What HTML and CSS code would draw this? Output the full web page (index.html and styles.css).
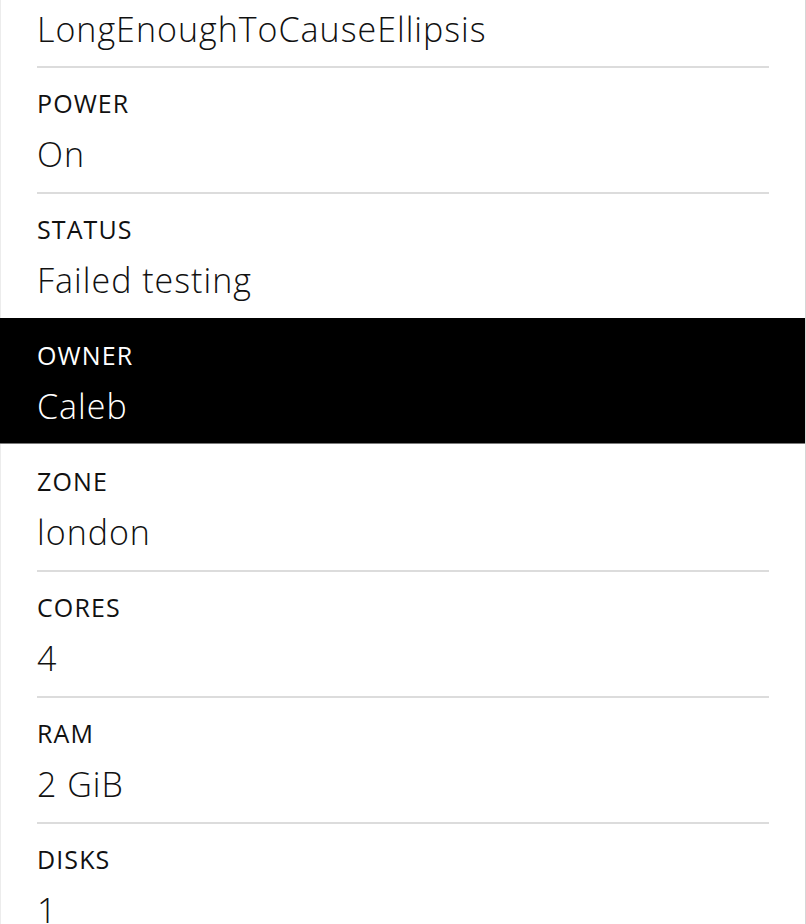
FILE: index.html
```html
<!DOCTYPE html>
<html lang="en">
<head>
<meta charset="utf-8">
<title>Machine details</title>
<link rel="stylesheet" href="styles.css">
</head>
<body>
<div class="panel">
  <ul class="details">
    <li class="item item--partial">
      <div class="inner">
        <div class="value value--ellipsis">LongEnoughToCauseEllipsis</div>
      </div>
    </li>
    <li class="item">
      <div class="inner">
        <div class="label">POWER</div>
        <div class="value">On</div>
      </div>
    </li>
    <li class="item">
      <div class="inner">
        <div class="label">STATUS</div>
        <div class="value">Failed testing</div>
      </div>
    </li>
    <li class="item item--active">
      <div class="inner">
        <div class="label">OWNER</div>
        <div class="value">Caleb</div>
      </div>
    </li>
    <li class="item">
      <div class="inner">
        <div class="label">ZONE</div>
        <div class="value">london</div>
      </div>
    </li>
    <li class="item">
      <div class="inner">
        <div class="label">CORES</div>
        <div class="value">4</div>
      </div>
    </li>
    <li class="item">
      <div class="inner">
        <div class="label">RAM</div>
        <div class="value">2 GiB</div>
      </div>
    </li>
    <li class="item">
      <div class="inner">
        <div class="label">DISKS</div>
        <div class="value">1</div>
      </div>
    </li>
  </ul>
</div>
</body>
</html>
```
FILE: styles.css
```css
html, body {
  margin: 0;
  padding: 0;
  background: #ffffff;
}

body {
  font-family: "Open Sans", "Noto Sans", sans-serif;
  color: #111111;
}

.panel {
  width: 806px;
  box-sizing: border-box;
  border-left: 1px solid #ececec;
  border-right: 1px solid #d6d6d6;
}

.details {
  list-style: none;
  margin: 0;
  padding: 0;
}

.item {
  padding: 0 36px;
}

.inner {
  border-top: 2px solid #dcdcdc;
  padding: 20px 0 17px;
}

.item--partial .inner {
  border-top: 0;
  padding: 4px 0 12px;
}

.label {
  font-size: 25px;
  line-height: 30px;
  font-weight: 500;
  letter-spacing: 1.1px;
}

.value {
  font-size: 34px;
  line-height: 42px;
  font-weight: 300;
  letter-spacing: 1px;
  margin-top: 15px;
  white-space: nowrap;
}

.value--ellipsis {
  margin-top: 0;
  line-height: 50px;
  overflow: hidden;
  text-overflow: ellipsis;
}

.item--active {
  background: #000000;
  color: #ffffff;
  margin-left: -1px;
  padding-left: 37px;
  border-bottom: 1px solid #7a7a7a;
}

.item--active .inner {
  border-top-color: transparent;
  padding-bottom: 16px;
}

.item--active + .item .inner {
  border-top-color: transparent;
}
```
